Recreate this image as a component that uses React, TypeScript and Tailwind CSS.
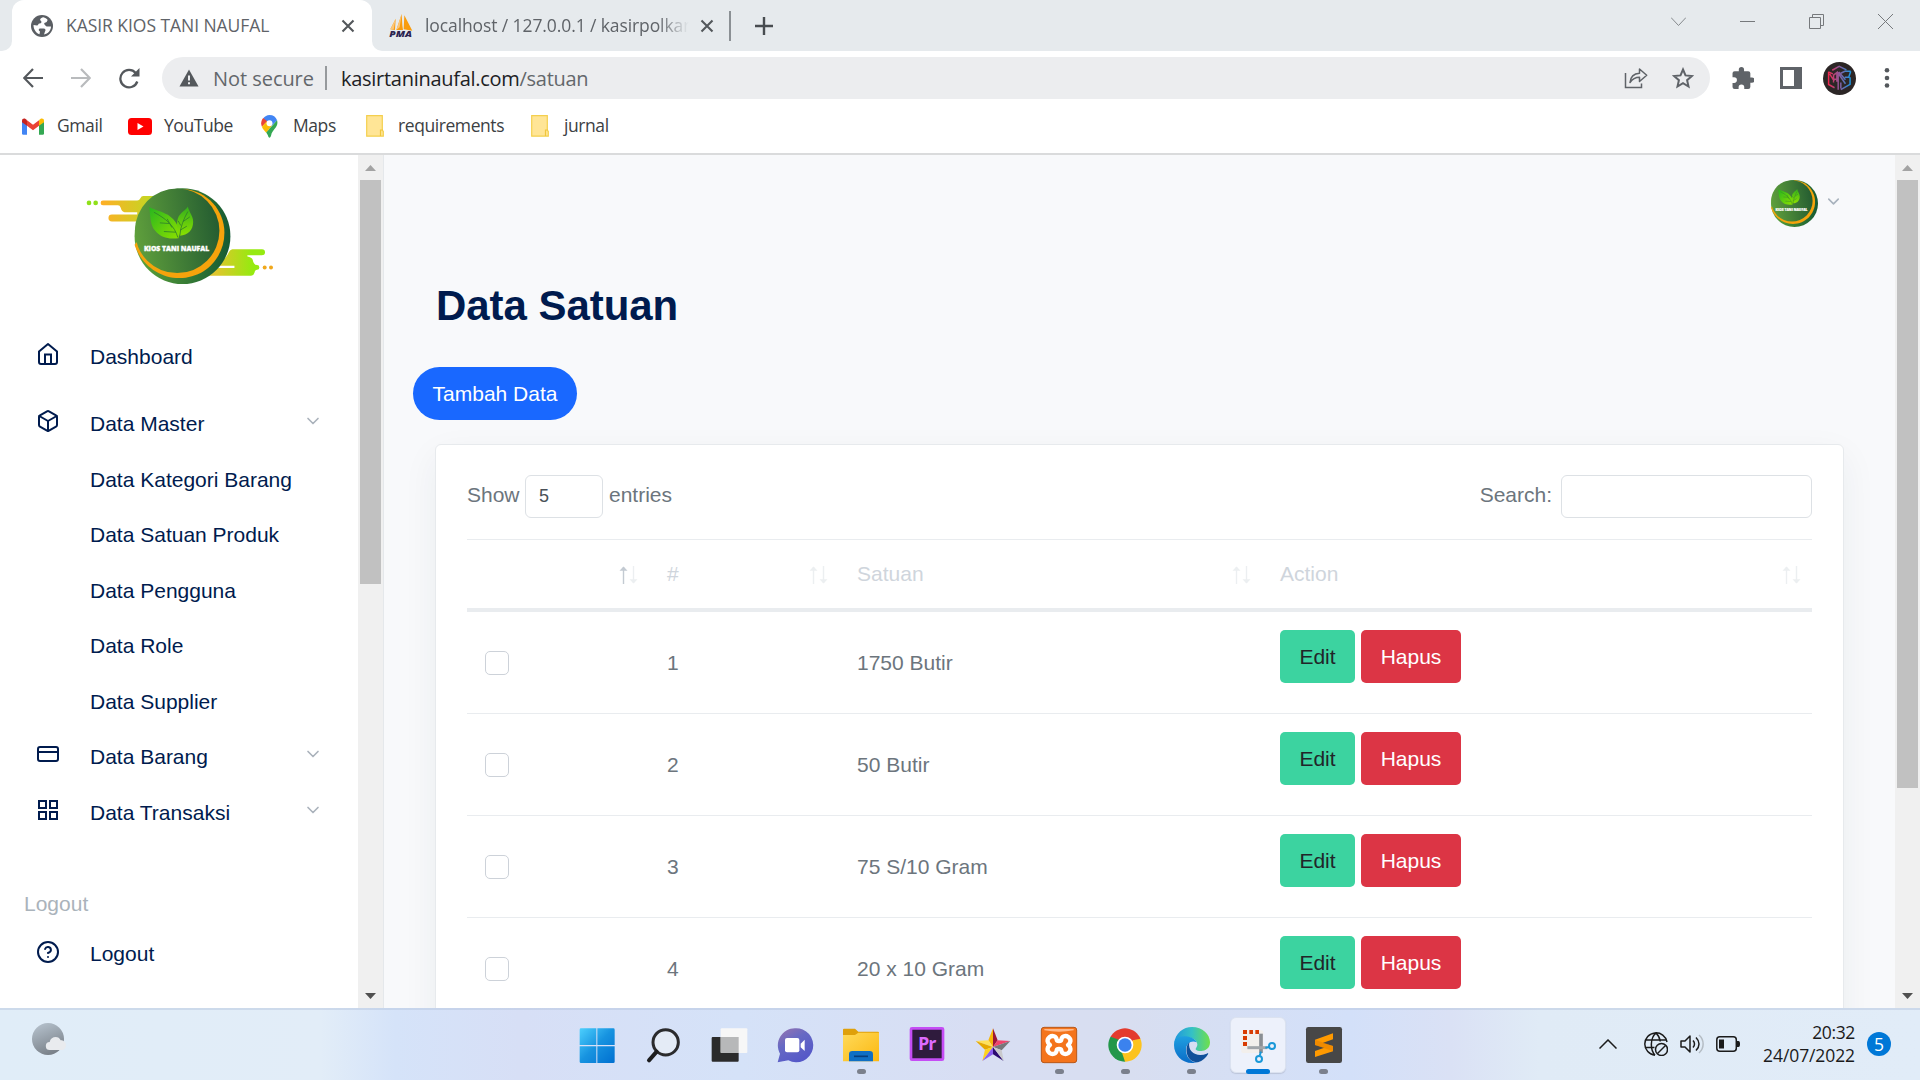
import React from "react";
import { Box, CreditCard, ChevronDown, CircleHelp } from "lucide-react";

const UI = "font-['Open_Sans','Noto_Sans',sans-serif]";

function Leaves() {
  return (
    <>
      <path d="M446 170c4 28 2 52 18 72 18 22 42 26 70 22 8-28-8-54-32-70-20-12-38-14-56-24z" fill="url(#leafA)" />
      <path d="M562 169c-2 8-24 18-30 36-6 20 0 40 6 52 24-2 40-16 40-42 0-18-12-28-16-46z" fill="url(#leafB)" />
      <path d="M460 186c34 18 62 40 72 76M478 218l28 2M490 244l36 2M514 232l-14-26M562 184c-12 22-22 44-24 72M541 226l-8-14M539 240l20-12M548 214l20-14" stroke="#2f7d2c" strokeWidth="2.4" fill="none" />
    </>
  );
}

function Disc() {
  return (
    <>
      <circle cx="546" cy="258" r="144" fill="url(#discOuter)" />
      <path d="M546 116c76 4 126 66 126 132 0 74-58 136-136 136-60 0-114-40-134-100z" fill="#f5a30c" />
      <circle cx="530" cy="242" r="127" fill="url(#discInner)" />
      <Leaves />
      <text x="528" y="304" textAnchor="middle" textLength="196" lengthAdjust="spacingAndGlyphs" fontSize="21" fontWeight="800" fill="#fff" stroke="#fff" strokeWidth="1" fontFamily="Open Sans, sans-serif">
        KIOS TANI NAUFAL
      </text>
    </>
  );
}

function LogoDefs() {
  return (
    <svg width="0" height="0" className="absolute">
      <defs>
        <linearGradient id="discOuter" x1="0" x2="1"><stop offset="0" stopColor="#5fa539" /><stop offset="1" stopColor="#155a33" /></linearGradient>
        <linearGradient id="discInner" x1="0" x2="1" y1=".55" y2=".4"><stop offset="0" stopColor="#5f9f3c" /><stop offset="1" stopColor="#245c31" /></linearGradient>
        <linearGradient id="leafA" x1="0" y1="0" x2="1" y2="1"><stop offset="0" stopColor="#27b51f" /><stop offset="1" stopColor="#8be000" /></linearGradient>
        <linearGradient id="leafB" x1="0" y1="0" x2="0" y2="1"><stop offset="0" stopColor="#33b01c" /><stop offset="1" stopColor="#8be000" /></linearGradient>
        <linearGradient id="streakL" x1="0" x2="1"><stop offset="0" stopColor="#ffae26" /><stop offset="1" stopColor="#b9de22" /></linearGradient>
        <linearGradient id="streakR" x1="0" x2="1"><stop offset="0" stopColor="#e0c030" /><stop offset=".25" stopColor="#dfc62c" /><stop offset=".8" stopColor="#96ea10" /><stop offset="1" stopColor="#96ea10" /></linearGradient>
      </defs>
    </svg>
  );
}

function Logo() {
  return (
    <svg viewBox="250 105 580 305" className="ml-[83.5px] h-[102px] w-[193px]">
      <circle cx="265" cy="158" r="7" fill="#8fe01a" />
      <circle cx="285" cy="158" r="7" fill="#8fe01a" />
      <path d="M307 151H410q6 0 10-8 2-6 8-6H480V214H334a10 10 0 0 1 0-21H410v-7H372q-8 0-12-14-2-7-8-7H307a7 7 0 0 1 0-14z" fill="url(#streakL)" />
      <path d="M600 377H752q8 0 10-8 2-10 8-10a7 7 0 0 0 0-14q-10 0-13-16-3-8-16-10v-4h44a9 9 0 0 0 0-18H696q-6 0-10 8-6 14-16 22z" fill="url(#streakR)" />
      <path d="M650 347h52v7h-56z" fill="#fff" />
      <circle cx="793" cy="352" r="6" fill="#f0a81c" />
      <circle cx="812" cy="352" r="6" fill="#f0a81c" />
      <Disc />
    </svg>
  );
}

function Close({ className = "" }: { className?: string }) {
  return (
    <svg viewBox="0 0 14 14" className={"h-[14px] w-[14px] shrink-0 " + className}>
      <path d="M1.5 1.5l11 11M12.500 1.500l-11 11" stroke="#53575b" strokeWidth="2.1" />
    </svg>
  );
}

function TabStrip() {
  return (
    <div className={"flex h-[51px] bg-[#e6eaed] text-[17.5px] text-[#5f6368] " + UI}>
      <div className="w-3 bg-white"><div className="h-full rounded-br-[10px] bg-[#e6eaed]" /></div>
      <div className="flex w-[360px] items-center rounded-t-xl bg-white pl-[19px]">
        <svg viewBox="0 0 22 22" className="h-[22px] w-[22px]">
          <circle cx="11" cy="11" r="11" fill="#5a5e63" />
          <path d="M12.500 2.300C9 3 8.500 5 10 6c1 .8.500 2.500-1.500 2.500-1.500 0-1 2-2.500 2l-3.500-.500c0 4.500 2.500 8 6 9.200L9 16.500c-2-1-1.500-3 .500-3h3c2 0 2.500 1.500 1.500 3l-1 3c4-.800 7-4 7-8h-4c-1.500 0-1.500-1.500-2.500-2-.800-.500 0-2 1-2 1.300 0 1.500-1.500 2.200-2.500-1-1.200-2.700-2.200-4.200-2.700z" fill="#fff" />
        </svg>
        <span className="ml-[13px] w-[250px] whitespace-nowrap tracking-[-0.05px]">KASIR KIOS TANI NAUFAL</span>
        <Close className="ml-[25px]" />
      </div>
      <div className="flex flex-1 bg-white">
        <div className="flex flex-1 items-center rounded-bl-[10px] bg-[#e6eaed] pl-[17px]">
          <svg viewBox="0 0 72 72" className="h-6 w-6 overflow-visible">
            <path d="M4 46L20 14l-2 34zM22 48L38 0l2 34 2 14zM44 46L46 4l24 46z" fill="#f89c0e" />
            <path d="M4 46L20 14l-6 32zM22 48L38 0l-6 40z" fill="#fbc67a" />
            <text x="1" y="69" fontSize="25" fontWeight="800" fontStyle="italic" textLength="68" lengthAdjust="spacingAndGlyphs" fill="#2b2350" fontFamily="Open Sans, sans-serif">PMA</text>
          </svg>
          <span className="ml-3 w-[264px] overflow-hidden whitespace-nowrap tracking-[-0.1px] [mask-image:linear-gradient(to_right,#000_88%,transparent)]">localhost / 127.0.0.1 / kasirpolkan</span>
          <Close className="ml-[11px]" />
          <div className="ml-[15px] h-[30px] w-[2px] bg-[#8b9094]" />
          <svg viewBox="0 0 18 18" className="ml-[24px] h-[18px] w-[18px]"><path d="M9 0v18M0 9h18" stroke="#484c50" strokeWidth="2.4" /></svg>
          <div className="mr-[27px] ml-auto flex items-center gap-[54px] pb-2">
            <svg viewBox="0 0 15 15" className="h-[15px] w-[15px]"><path d="M0 3.500l7.500 8 7.500-8" fill="none" stroke="#85898c" /></svg>
            <svg viewBox="0 0 15 15" className="h-[15px] w-[15px]"><path d="M0 7.500h15" stroke="#76797c" /></svg>
            <svg viewBox="0 0 15 15" className="h-[15px] w-[15px]"><path d="M.5 3.500h11v11H.5zM3.500 3.500v-3h11v11h-3" fill="none" stroke="#76797c" /></svg>
            <svg viewBox="0 0 15 15" className="h-[15px] w-[15px]"><path d="M0 0l15 15M15 0L0 15" stroke="#76797c" /></svg>
          </div>
        </div>
      </div>
    </div>
  );
}

function Toolbar() {
  return (
    <div className={"flex h-[54px] items-center bg-white text-[20px] " + UI}>
      <svg viewBox="0 0 20 20" className="ml-[23px] h-5 w-5"><path d="M20 10H1.500M10 1L1.200 10l8.800 9" fill="none" stroke="#54585c" strokeWidth="2.200" /></svg>
      <svg viewBox="0 0 20 20" className="ml-7 h-5 w-5"><path d="M0 10h18.500M10 1l8.800 9-8.800 9" fill="none" stroke="#b9bbbd" strokeWidth="2.200" /></svg>
      <svg viewBox="0 0 21 21" className="ml-7 h-[21px] w-[21px]">
        <path d="M18.300 13.500a8.700 8.700 0 1 1-1.600-8.500" fill="none" stroke="#54585c" strokeWidth="2.300" />
        <path d="M20.500 0v8.500H12z" fill="#54585c" />
      </svg>
      <div className="ml-[22px] flex h-[42px] w-[1548px] items-center rounded-full bg-[#ecedef]">
        <svg viewBox="0 0 20 18" className="ml-[17px] h-[18px] w-5"><path d="M10 .5L19.500 17.500H.5z" fill="#54585c" /><path d="M9 6.500h2V11.500H9zM9 13.200h2v2H9z" fill="#ecedef" /></svg>
        <span className="ml-[14px] w-[101px] pt-px tracking-[-0.05px] whitespace-nowrap text-[#63676b]">Not secure</span>
        <div className="ml-[11px] h-6 w-[2px] bg-[#96999c]" />
        <span className="ml-[14px] pt-px tracking-[-0.28px] whitespace-nowrap text-[#202124]">kasirtaninaufal.com<span className="text-[#63676b]">/satuan</span></span>
        <svg viewBox="0 0 24 22" className="mr-6 ml-auto h-[22px] w-6" fill="none" stroke="#5f6368" strokeWidth="1.500">
          <path d="M1.500 6v14.500h16v-4" />
          <path d="M6 15.500C6.500 9.500 10 6.500 15.500 6.200V2l7.200 6.300-7.200 6.200v-4.200c-4.500 0-7 1.500-9.500 5.200z" strokeLinejoin="round" />
        </svg>
        <svg viewBox="0 0 22 22" className="mr-4 h-[22px] w-[22px]"><path d="M11 2.500l2.500 5.900 6.400.6-4.800 4.200 1.400 6.300L11 16.200l-5.500 3.300 1.400-6.300L2.100 9l6.400-.6z" fill="none" stroke="#5f6368" strokeWidth="2" /></svg>
      </div>
      <svg viewBox="1.500 1 21 21" className="ml-[22px] h-[22px] w-[22px]"><path d="M20.500 11H19V7a2 2 0 0 0-2-2h-4V3.500a2.500 2.500 0 0 0-5 0V5H4a2 2 0 0 0-2 2v3.800h1.500a2.700 2.700 0 0 1 0 5.400H2V20a2 2 0 0 0 2 2h3.800v-1.500a2.700 2.700 0 0 1 5.400 0V22H17a2 2 0 0 0 2-2v-4h1.500a2.500 2.500 0 0 0 0-5z" fill="#5f6368" /></svg>
      <svg viewBox="0 0 22 22" className="ml-[26px] h-[22px] w-[22px]"><path d="M0 0h22v22H0zM3 3v16h11V3z" fill="#5f6368" fillRule="evenodd" /></svg>
      <svg viewBox="0 0 100 100" className="ml-[21px] h-[33px] w-[33px]">
        <defs><linearGradient id="hex" gradientUnits="userSpaceOnUse" x1="16" y1="0" x2="84" y2="0"><stop offset="0" stopColor="#f0284e" /><stop offset=".5" stopColor="#8a5a9c" /><stop offset="1" stopColor="#1a98e4" /></linearGradient></defs>
        <circle cx="50" cy="50" r="50" fill="#2c2626" />
        <path d="M28 25l21-12 22 11M16 30l14 6M17 30v38l18 10M20 36l14 22M32 62V40l10-8v28M32 52h10M46 84V34l22 32M48 30l20 24M54 80V62M84 28H66l-12 6M84 28l-6 18H66M82 46v22L54 84" fill="none" stroke="url(#hex)" strokeWidth="4.500" />
      </svg>
      <svg viewBox="0 0 6 22" className="ml-[28px] h-[22px] w-[6px]" fill="#54585c"><circle cx="3" cy="3.200" r="2.300" /><circle cx="3" cy="11" r="2.300" /><circle cx="3" cy="18.500" r="2.300" /></svg>
    </div>
  );
}

function FolderMark() {
  return (
    <svg viewBox="0 0 18 22" className="h-[22px] w-[18px]"><path d="M.7.7h15.600v15l1 .5v5H.7z" fill="#ffe596" stroke="#f4cf4e" strokeWidth="1.200" /><path d="M14.500 21v-6h2.500" fill="none" stroke="#f0c63c" strokeWidth="1.200" /></svg>
  );
}

function Bookmarks() {
  return (
    <div className={"flex h-12 items-center bg-white pb-[6px] text-[17.5px] tracking-[-0.42px] text-[#3c4043] " + UI}>
      <svg viewBox="0 0 66 50" className="ml-[22px] h-[17px] w-[22px]">
        <path d="M0 10v36q0 4 4 4h11V20z" fill="#4285f4" /><path d="M66 10v36q0 4-4 4H51V20z" fill="#34a853" />
        <path d="M51 6v17l15-11V8c0-8-9-10-15-2z" fill="#fbbc04" /><path d="M15 23V6l18 14L51 6v17L33 36z" fill="#ea4335" /><path d="M0 8v4l15 11V6C9-2 0 0 0 8z" fill="#c5221f" />
      </svg>
      <span className="ml-[13px] w-[58px] pb-[2px]">Gmail</span>
      <svg viewBox="0 0 24 17" className="ml-[13px] h-[17px] w-6"><rect width="24" height="17" rx="3.500" fill="#f00" /><path d="M9.500 5l6 3.500-6 3.500z" fill="#fff" /></svg>
      <span className="ml-3 w-[70px] pb-[2px]">YouTube</span>
      <svg viewBox="0 0 50 70" className="ml-[27px] h-[23px] w-[17px]">
        <path d="M25 0a25 25 0 0 1 23 16L24 42 6 10A25 25 0 0 1 25 0z" fill="#4285f4" />
        <path d="M6 9l12 10L2 36C-3 24 1 14 6 9z" fill="#ea4335" /><path d="M2 36l15-17 15 14-17 21C8 47 4 42 2 36z" fill="#fbbc04" />
        <path d="M48 16c6 22-14 26-18 46-2 10-8 10-10 0-1-3-3-6-5-9z" fill="#34a853" /><circle cx="25" cy="25" r="9" fill="#fff" />
      </svg>
      <span className="ml-[15px] w-[44px] pb-[2px]">Maps</span>
      <div className="ml-[29px]"><FolderMark /></div>
      <span className="ml-[14px] w-[108px] pb-[2px] whitespace-nowrap">requirements</span>
      <div className="ml-[25px]"><FolderMark /></div>
      <span className="ml-[15px] pb-[2px]">jurnal</span>
    </div>
  );
}

function ScrollTrack({ thumb }: { thumb: string }) {
  return (
    <div className="flex w-[25px] shrink-0 flex-col items-center bg-[#f0f0f0]">
      <svg viewBox="0 0 11 6" className="mt-[10px] h-[6px] w-[11px]"><path d="M0 6L5.500 0 11 6z" fill="#a3a3a3" /></svg>
      <div className={"mt-[9px] w-[21px] bg-[#c1c1c1] " + thumb} />
      <svg viewBox="0 0 11 6" className="mt-auto mb-[9px] h-[6px] w-[11px]"><path d="M0 0l5.500 6L11 0z" fill="#505050" /></svg>
    </div>
  );
}

function GridIcon() {
  return (
    <svg viewBox="0 0 20 20" className="mx-[2px] h-5 w-5" fill="none" stroke="currentColor" strokeWidth="2"><path d="M1 1h7v7H1zM12 1h7v7h-7zM1 12h7v7H1zM12 12h7v7h-7z" /></svg>
  );
}

function HomeIcon() {
  return (
    <svg viewBox="0 0 24 24" className="mb-[2px] h-6 w-6" fill="none" stroke="currentColor" strokeWidth="2" strokeLinejoin="round"><path d="M3 9.500L12 2l9 7.500V20a2 2 0 0 1-2 2H5a2 2 0 0 1-2-2z" /><path d="M9 22V12.500h6V22" strokeLinejoin="miter" /></svg>
  );
}

function NavItem({ icon, label, open, className = "h-[55.5px]" }: { icon?: React.ReactNode; label: string; open?: boolean; className?: string }) {
  return (
    <a className={"flex items-center text-[#001b4e] " + className}>
      <span className="ml-9 flex w-[54px] pb-[5px]">{icon}</span>
      <span className="whitespace-nowrap">{label}</span>
      {open && <ChevronDown className="mr-[35px] mb-[5px] ml-auto text-[#aab2bb]" size={20} strokeWidth={2} />}
    </a>
  );
}

function SideNav() {
  return (
    <aside className="flex w-[384px] shrink-0 border-r border-[#e5e8eb] bg-white">
      <nav className="flex w-[358px] flex-col pt-[30px] text-[21px]">
        <Logo />
        <NavItem className="mt-[43px] h-[54px]" icon={<HomeIcon />} label="Dashboard" />
        <NavItem className="mt-3 h-[55.5px]" icon={<Box size={24} />} label="Data Master" open />
        <NavItem label="Data Kategori Barang" />
        <NavItem label="Data Satuan Produk" />
        <NavItem label="Data Pengguna" />
        <NavItem label="Data Role" />
        <NavItem label="Data Supplier" />
        <NavItem icon={<CreditCard size={24} />} label="Data Barang" open />
        <NavItem icon={<GridIcon />} label="Data Transaksi" open />
        <div className="mt-[49px] ml-6 flex h-[30px] items-center text-[#aab3bb]">Logout</div>
        <NavItem className="mt-2 h-[54px]" icon={<CircleHelp size={24} />} label="Logout" />
      </nav>
      <ScrollTrack thumb="h-[404px]" />
    </aside>
  );
}

function SortArrows({ first }: { first?: boolean }) {
  return (
    <svg viewBox="0 0 19 18" className="h-[18px] w-[19px]" fill="none" strokeWidth="1.400">
      <g stroke={first ? "#c3cad2" : "#eceff1"} fill={first ? "#c3cad2" : "#eceff1"}><path d="M4.500 1v17" /><path d="M4.500 .5L8.500 4.800h-8z" stroke="none" /></g>
      <g stroke="#eceff1" fill="#eceff1"><path d="M14.500 0v17" /><path d="M14.500 17.500L18.500 13.200h-8z" stroke="none" /></g>
    </svg>
  );
}

const units = ["1750 Butir", "50 Butir", "75 S/10 Gram", "20 x 10 Gram"];
const COLS = "grid grid-cols-[190px_190px_423px_542px]";

function Main() {
  return (
    <main className="flex min-w-0 flex-1 flex-col overflow-hidden bg-[#f8f9fb]">
      <div className="flex h-[97px] shrink-0 items-center justify-end pr-[52px]">
        <svg viewBox="402 114 288 288" className="h-[47px] w-[47px]"><Disc /></svg>
        <ChevronDown className="mb-1 ml-[6px] text-[#a8b2bd]" size={19} strokeWidth={2} />
      </div>
      <h1 className="mt-[29px] ml-[52px] h-[50px] shrink-0 text-[42px] leading-[50px] font-bold tracking-[-0.05px] whitespace-nowrap text-[#001b4e]">Data Satuan</h1>
      <button className="mt-[36px] ml-[29px] h-[53px] w-[164px] shrink-0 rounded-full bg-[#1968ff] text-[21px] whitespace-nowrap text-white">Tambah Data</button>
      <section className="mt-6 ml-[51px] h-[700px] w-[1409px] shrink-0 rounded-md border border-[#e7eaed] bg-white px-[31px] pt-[30px] text-[21px] text-[#6c757d] shadow-[0_12px_36px_rgba(30,45,60,0.06)]">
        <div className="flex h-[43px] items-center">
          <span className="w-[52px] pb-1">Show</span>
          <span className="ml-[6px] flex h-[43px] w-[78px] items-center rounded-md border border-[#dde1e5] pl-[13px] text-[18px] text-[#495057]">5</span>
          <span className="ml-[6px] pb-1">entries</span>
          <span className="mr-[9px] ml-auto pb-1">Search:</span>
          <input className="h-[43px] w-[251px] rounded-md border border-[#dde1e5] bg-white" />
        </div>
        <div className={"mt-[21px] h-[73px] items-center border-t border-b-4 border-[#e9ecef] text-[#cfd5dc] " + COLS}>
          <div className="flex justify-end pt-[2px] pr-[19px]"><SortArrows first /></div>
          <div className="flex items-center justify-between pr-[19px] pl-[10px]">#<span className="pt-[2px]"><SortArrows /></span></div>
          <div className="flex items-center justify-between pr-[19px] pl-[10px]">Satuan<span className="pt-[2px]"><SortArrows /></span></div>
          <div className="flex items-center justify-between pr-[11px] pl-[10px]">Action<span className="pt-[2px]"><SortArrows /></span></div>
        </div>
        {units.map((unit, i) => (
          <div key={unit} className={"h-[102px] items-center border-b border-[#e9ecef] " + COLS}>
            <div className="ml-[18px] h-6 w-6 rounded-[5px] border border-[#cdd2d9]" />
            <div className="pl-[10px]">{i + 1}</div>
            <div className="pl-[10px]">{unit}</div>
            <div className="flex gap-[6px] pb-[13px] pl-[10px]">
              <button className="h-[53px] w-[75px] rounded-[5px] bg-[#3cd3a0] pt-px text-[#212529]">Edit</button>
              <button className="h-[53px] w-[100px] rounded-[5px] bg-[#dc3545] pt-px text-white">Hapus</button>
            </div>
          </div>
        ))}
      </section>
    </main>
  );
}

function TaskIcon({ children, running, active }: { children: React.ReactNode; running?: boolean; active?: boolean }) {
  return (
    <div className="relative flex h-full w-[66.1px] items-center justify-center">
      <div className={active ? "mt-[2px] flex h-14 w-14 items-center justify-center rounded-md border border-[#dbe2f0] bg-[#edf1fb] shadow-[0_1px_1px_#bcc5da]" : "mt-[2px] flex h-14 w-14 items-center justify-center"}>
        <svg viewBox="0 0 108 108" className="h-9 w-9 overflow-visible">{children}</svg>
      </div>
      {running && <div className={active ? "absolute bottom-[6px] h-[5px] w-6 rounded-full bg-[#0078d7]" : "absolute bottom-[6px] h-[5px] w-[9px] rounded-full bg-[#7b808c]"} />}
    </div>
  );
}

function Taskbar() {
  return (
    <footer className="flex h-[72px] items-center bg-[linear-gradient(90deg,#e0edf8_0px,#e2edf8_320px,#d5e3f9_395px,#d7dff6_520px,#d5e2f8_740px,#d8def3_980px,#d8def0_1130px,#d3e0f9_1350px,#dae1f5_1450px,#e0ebf6_1540px,#e1ecf8_1920px)] shadow-[inset_0_2px_0_rgba(180,195,220,0.45)]">
      <div className="w-[563.700px] pb-[10px] pl-8">
        <svg viewBox="0 0 102 96" className="h-8 w-[34px]">
          <defs><linearGradient id="moon" x1=".3" y1="0" x2=".7" y2="1"><stop offset="0" stopColor="#b3bfca" /><stop offset="1" stopColor="#767d85" /></linearGradient></defs>
          <circle cx="48" cy="48" r="48" fill="url(#moon)" /><path d="M54 81a12 12 0 0 1-1-24c3-18 28-20 33-5 22 0 20 29 2 29z" fill="#e9ebee" />
        </svg>
      </div>
      <TaskIcon>
        <defs><linearGradient id="win" gradientUnits="userSpaceOnUse" x1="0" y1="0" x2="108" y2="108"><stop offset="0" stopColor="#4fd3ff" /><stop offset=".5" stopColor="#1793e0" /><stop offset="1" stopColor="#006fd0" /></linearGradient></defs>
        <path d="M6 4h46v50H2V8q0-4 4-4zM55 4h48q4 0 4 4v46H55zM2 58h50v50H6q-4 0-4-4zM55 58h52v46q0 4-4 4H55z" fill="url(#win)" />
      </TaskIcon>
      <TaskIcon>
        <circle cx="62" cy="46" r="38" fill="#e4ebf6" stroke="#2b2b2d" strokeWidth="9" /><path d="M35 74L12 100" stroke="#1d1d1f" strokeWidth="12" strokeLinecap="round" />
      </TaskIcon>
      <TaskIcon>
        <rect x="2" y="30" width="81" height="74" rx="3" fill="#2b2b2b" /><rect x="29" y="4" width="80" height="74" rx="3" fill="#f7f7f7" /><path d="M29 30h54v48H29z" fill="#b7b8b9" />
      </TaskIcon>
      <TaskIcon>
        <defs><linearGradient id="chat" x1="0" y1="0" x2=".6" y2="1"><stop offset="0" stopColor="#9a74ae" /><stop offset=".45" stopColor="#6669c4" /><stop offset="1" stopColor="#5558c8" /></linearGradient></defs>
        <path d="M54 4a51 51 0 1 1-20 96L2 106l7-26A51 51 0 0 1 54 4z" fill="url(#chat)" /><rect x="24" y="33" width="43" height="43" rx="6" fill="#fff" /><path d="M71 50l12-12v34L71 61z" fill="#fff" />
      </TaskIcon>
      <TaskIcon running>
        <defs><linearGradient id="fold" x1="0" y1="0" x2="1" y2="1"><stop offset="0" stopColor="#ffda5a" /><stop offset="1" stopColor="#fbb811" /></linearGradient></defs>
        <path d="M0 8q0-3 3-3h33l10 9h59q3 0 3 3v20H0z" fill="#dfa00a" /><path d="M0 24h36l10-7h62v86H0z" fill="url(#fold)" /><path d="M18 103V82q0-10 10-10h52q10 0 10 10v21z" fill="#0f6fc4" /><path d="M33 88h42" stroke="#063e7d" strokeWidth="5" />
      </TaskIcon>
      <TaskIcon>
        <rect x="6" y="4" width="96" height="94" rx="3" fill="#2f1b3d" stroke="#c54df5" strokeWidth="8" /><text x="27" y="69" fontSize="54" fontWeight="700" fill="#dd6bff" textLength="55" fontFamily="Open Sans, sans-serif">Pr</text>
      </TaskIcon>
      <TaskIcon>
        <path d="M54 4v56L40 40z" fill="#f7b60a" /><path d="M54 4v56l14-20z" fill="#9b1638" /><path d="M2 42l38-2 14 20z" fill="#ffe15a" /><path d="M2 42l52 18-24 8z" fill="#e6a800" /><path d="M106 42L68 40 54 60z" fill="#f0446c" /><path d="M106 42L54 60l26 10z" fill="#77767a" />
        <path d="M54 60L30 68 22 102z" fill="#ffd21e" /><path d="M54 60v22L22 102z" fill="#8a5cf0" /><path d="M54 60v22l32 20z" fill="#2b0a70" /><path d="M54 60l26 10 6 32z" fill="#c9c9cc" />
      </TaskIcon>
      <TaskIcon running>
        <rect x="1" y="1" width="106" height="106" rx="8" fill="#f4741c" stroke="#b8581a" strokeWidth="3" /><path d="M10 6h88v4q-44 8-88 0z" fill="#ffb98a" />
        <path d="M26 30c8-6 20-3 21 8 1 6 13 6 14 0 1-11 13-14 21-8 10 8 7 18-1 24 8 6 11 16 1 24-8 6-20 3-21-8-1-6-13-6-14 0-1 11-13 14-21 8-10-8-7-18 1-24-8-6-11-16-1-24z" fill="none" stroke="#fff" strokeWidth="13" strokeLinejoin="round" />
      </TaskIcon>
      <TaskIcon running>
        <path d="M54 54L10.700 29A50 50 0 0 1 97.300 29z" fill="#e33b2e" /><path d="M54 54L97.300 29A50 50 0 0 1 54 104z" fill="#fcc31e" /><path d="M54 54v50A50 50 0 0 1 10.700 29z" fill="#23974a" />
        <path d="M54 29h43.300a50 50 0 0 1 2.700 6L54 44z" fill="#e33b2e" /><path d="M75.600 66.500L54 104l-10-30z" fill="#fcc31e" /><path d="M32.400 66.500L10.700 29 40 40z" fill="#23974a" /><circle cx="54" cy="54" r="25" fill="#fff" /><circle cx="54" cy="54" r="20" fill="#3b82ee" />
      </TaskIcon>
      <TaskIcon running>
        <defs><linearGradient id="edgeTop" x1="0" x2="1"><stop offset="0" stopColor="#1f97dd" /><stop offset=".5" stopColor="#35c1c5" /><stop offset="1" stopColor="#6fe04a" /></linearGradient><linearGradient id="edgeL" x1="0" y1="0" x2="0" y2="1"><stop offset="0" stopColor="#1f9fe0" /><stop offset="1" stopColor="#0a6cc8" /></linearGradient></defs>
        <path d="M0 50C4 18 28 0 54 0c32 0 54 22 54 46 0 18-14 26-26 26-10 0-18-3-17-7 2-3 5-7 5-13C68 36 50 30 36 30 18 30 4 40 0 50z" fill="url(#edgeTop)" />
        <path d="M0 54c0-18 14-26 30-26 20 0 34 8 38 18-14-8-32 2-32 22 0 22 14 38 34 38-6 2-12 2-16 2C24 108 0 84 0 54z" fill="url(#edgeL)" /><path d="M46 46C30 60 36 108 72 106c14-4 24-14 30-24 2-3-1-4-4-2-28 12-58-4-52-34z" fill="#10509a" />
      </TaskIcon>
      <TaskIcon running active>
        <rect x="4" y="10" width="66" height="68" rx="5" fill="#f2efec" /><path d="M9 9h12v12H9zM28 9h11v12H28zM46 9h11v12H46zM9 27h12v12H9zM9 45h12v12H9z" fill="#d83b01" />
        <path d="M63 20v58" stroke="#8a8f94" strokeWidth="11" /><path d="M22 62h60" stroke="#a1a5aa" strokeWidth="9" /><path d="M63 74l-4 12M76 62l12-2" stroke="#1a98d8" strokeWidth="6" /><circle cx="57" cy="96" r="9" fill="none" stroke="#1a98d8" strokeWidth="6" /><circle cx="96" cy="57" r="9" fill="none" stroke="#1a98d8" strokeWidth="6" />
      </TaskIcon>
      <TaskIcon running>
        <rect width="108" height="108" rx="7" fill="#474747" /><path d="M27 38l54-19v18L50 48l31 9v16L27 90V72l28-10-28-8z" fill="#ff9a00" /><path d="M27 38v16l54 19V57z" fill="#e88200" opacity=".6" />
      </TaskIcon>
      <svg viewBox="0 0 18 10" className="ml-[242px] h-[10px] w-[18px]"><path d="M.5 9.500L9 1l8.500 8.500" fill="none" stroke="#1b1b1b" strokeWidth="1.500" /></svg>
      <svg viewBox="0 0 24 24" className="ml-[27px] h-6 w-6" fill="none" stroke="#1b1b1b" strokeWidth="1.500">
        <path d="M23 10A11.200 11.200 0 1 0 11 23.200M1.500 8h21M1 15.500h9.500M11 23C6 18 6 6 12 1c3 3 4 6 4.200 8.500" /><circle cx="17.500" cy="17.500" r="6" /><path d="M13.500 21.500l8-8" />
      </svg>
      <svg viewBox="0 0 24 20" className="ml-3 h-5 w-6" fill="none" stroke="#1b1b1b" strokeWidth="1.500"><path d="M1 7h4l5-5v16l-5-5H1zM13 6.500c2 2 2 5 0 7M16 3.500c4 4 4 9 0 13" strokeLinejoin="round" /><path d="M19 1c5.500 5 5.500 13 0 18" stroke="#b4bcc4" /></svg>
      <svg viewBox="0 0 24 16" className="ml-3 h-4 w-6"><rect x=".8" y=".8" width="19.500" height="14.400" rx="3" fill="none" stroke="#1b1b1b" strokeWidth="1.500" /><path d="M3 3.500h5v9H3z" fill="#1b1b1b" /><path d="M21 5h1.500q1.500 0 1.500 3t-1.500 3H21z" fill="#1b1b1b" /></svg>
      <div className={"ml-auto text-right text-[17.500px] leading-[23px] tracking-[-0.1px] text-[#1b1b1b] " + UI}>
        <div className="tracking-[-0.35px]">20:32</div>
        <div>24/07/2022</div>
      </div>
      <div className={"mr-[29px] ml-[12px] flex h-6 w-6 items-center justify-center rounded-full bg-[#0078d7] text-[17.5px] text-white " + UI}>5</div>
    </footer>
  );
}

export default function App() {
  return (
    <div className="flex h-[1080px] w-[1920px] flex-col overflow-hidden bg-white font-['Liberation_Sans',Arial,sans-serif]">
      <LogoDefs />
      <TabStrip />
      <Toolbar />
      <Bookmarks />
      <div className="h-[2px] bg-[#dadbdc]" />
      <div className="flex h-[853px]">
        <SideNav />
        <Main />
        <ScrollTrack thumb="h-[608px]" />
      </div>
      <Taskbar />
    </div>
  );
}
